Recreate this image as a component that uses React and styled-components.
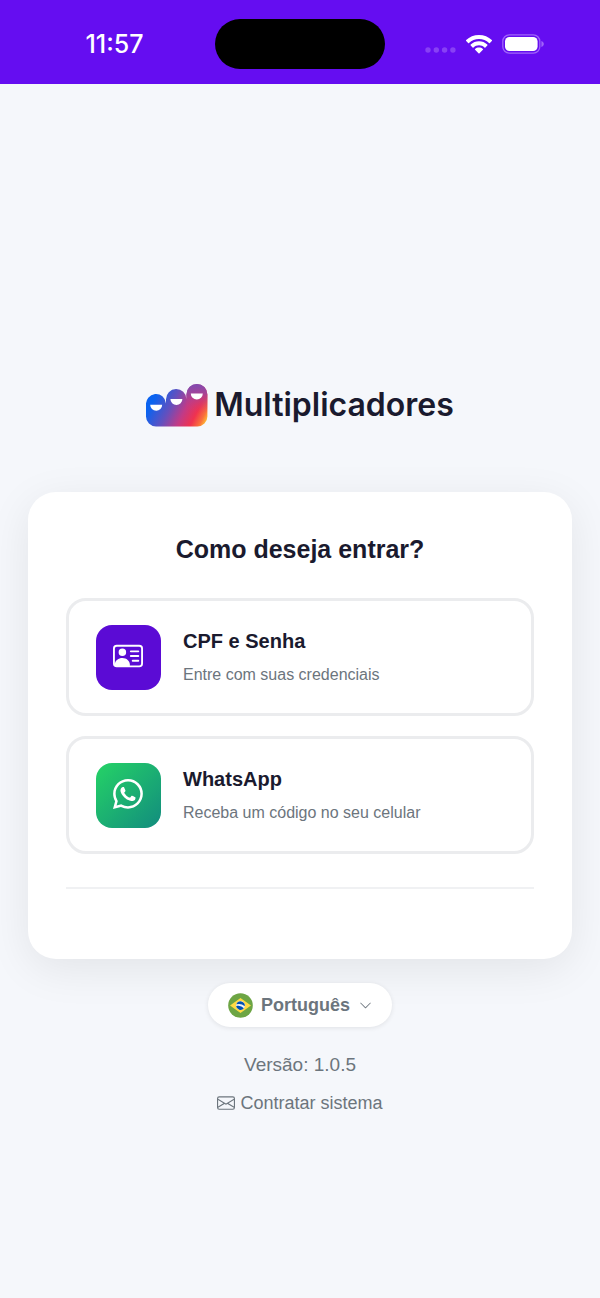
import styled, { createGlobalStyle } from 'styled-components';
import { BsPersonVcard, BsWhatsapp, BsChevronDown, BsEnvelope } from 'react-icons/bs';


export default function App(){
    return(
        <>
            <GlobalStyle />
            <Page>
                <StatusBar>
                    <Clock>11:57</Clock>
                    <Island />
                    <Signals>
                        <Dots />
                        <Wifi />
                        <Battery />
                    </Signals>
                </StatusBar>

                <Content>
                    <Logo>
                        <LogoMark />
                        <h1>Multiplicadores</h1>
                    </Logo>

                    <Card>
                        <h2>Como deseja entrar?</h2>

                        <Options>
                            <Option>
                                <OptionIcon $background='#5B0BD5'>
                                    <BsPersonVcard />
                                </OptionIcon>
                                <OptionText>
                                    <strong>CPF e Senha</strong>
                                    <span>Entre com suas credenciais</span>
                                </OptionText>
                            </Option>

                            <Option>
                                <OptionIcon $background='linear-gradient(135deg, #25D366 0%, #128C7E 100%)'>
                                    <BsWhatsapp />
                                </OptionIcon>
                                <OptionText>
                                    <strong>WhatsApp</strong>
                                    <span>Receba um código no seu celular</span>
                                </OptionText>
                            </Option>
                        </Options>

                        <Divider />
                    </Card>

                    <Language>
                        <BrazilFlag />
                        <select aria-label='Idioma' defaultValue='pt'>
                            <option value='pt'>Português</option>
                        </select>
                        <BsChevronDown />
                    </Language>

                    <Version>Versão: 1.0.5</Version>

                    <Contact href='#contratar'>
                        <BsEnvelope />
                        Contratar sistema
                    </Contact>
                </Content>
            </Page>
        </>
    );
}


function Dots(){
    return(
        <svg width='31' height='18' viewBox='0 0 31 18' fill='#8840F5' aria-hidden='true'>
            <circle cx='3' cy='15' r='2.7' />
            <circle cx='11.3' cy='15' r='2.7' />
            <circle cx='19.6' cy='15' r='2.7' />
            <circle cx='27.9' cy='15' r='2.7' />
        </svg>
    );
}

function Wifi(){
    return(
        <svg width='26' height='19' viewBox='0 0 26 19' fill='#FFFFFF' aria-hidden='true'>
            <path d='M13 0C8 0 3.5 1.9.2 5.1a.6.6 0 0 0 0 .9l1.9 1.9a.6.6 0 0 0 .9 0C5.6 5.4 9.1 3.9 13 3.9s7.4 1.5 10 4a.6.6 0 0 0 .9 0L25.8 6a.6.6 0 0 0 0-.9C22.5 1.9 18 0 13 0Z' />
            <path d='M13 6.3c-3.2 0-6.1 1.2-8.3 3.3a.6.6 0 0 0 0 .9l1.9 1.9a.6.6 0 0 0 .9 0c1.5-1.4 3.4-2.2 5.5-2.2s4 .8 5.5 2.2a.6.6 0 0 0 .9 0l1.9-1.9a.6.6 0 0 0 0-.9C19.1 7.5 16.2 6.3 13 6.3Z' />
            <path d='M13 12.5c-1.5 0-2.8.5-3.9 1.4a.6.6 0 0 0 0 .9l3.4 3.5a.7.7 0 0 0 1 0l3.4-3.5a.6.6 0 0 0 0-.9c-1.1-.9-2.4-1.4-3.9-1.4Z' />
        </svg>
    );
}

function Battery(){
    return(
        <svg width='42' height='20' viewBox='0 0 42 20' aria-hidden='true'>
            <rect x='.8' y='.8' width='37' height='18.4' rx='6.5' fill='none' stroke='#A064F9' strokeWidth='1.3' />
            <rect x='3' y='3' width='32.6' height='14' rx='4.5' fill='#FFFFFF' />
            <path d='M39.4 7v6c1.5-.5 2.4-1.7 2.4-3s-.9-2.5-2.4-3Z' fill='#A064F9' />
        </svg>
    );
}

function LogoMark(){
    return(
        <svg width='62' height='44' viewBox='0 0 62 44' aria-hidden='true'>
            <defs>
                <linearGradient id='markBase' x1='0' y1='14' x2='58' y2='44' gradientUnits='userSpaceOnUse'>
                    <stop offset='.12' stopColor='#0A63F0' />
                    <stop offset='.4' stopColor='#6350BE' />
                    <stop offset='.62' stopColor='#C23A86' />
                    <stop offset='.8' stopColor='#F0324F' />
                    <stop offset='.92' stopColor='#F9713A' />
                    <stop offset='1' stopColor='#FFC533' />
                </linearGradient>
                <linearGradient id='markTop' x1='0' y1='0' x2='0' y2='30' gradientUnits='userSpaceOnUse'>
                    <stop offset='0' stopColor='#7B4CB4' />
                    <stop offset='.35' stopColor='#9C469F' stopOpacity='.85' />
                    <stop offset='1' stopColor='#E0356A' stopOpacity='0' />
                </linearGradient>
            </defs>
            <path
                d='M0 22.5a10 10.5 0 0 1 20-2V16.5a10.2 10.2 0 0 1 20.4-.5V11.5A10.5 10.5 0 0 1 61.4 11.5V33.500a10 10 0 0 1-10 10H10A10 10 0 0 1 0 33.500Z'
                fill='url(#markBase)'
            />
            <path d='M40.400 11.500a10.500 10.500 0 0 1 21 0V30h-21Z' fill='url(#markTop)' />
            <g fill='#FFFFFF'>
                <path d='M4.200 21.800h12a6 6 0 0 1-12 0Z' />
                <path d='M24.400 16h12a6 6 0 0 1-12 0Z' />
                <path d='M44.800 10.400h12a6 6 0 0 1-12 0Z' />
            </g>
        </svg>
    );
}

function BrazilFlag(){
    return(
        <svg width='25' height='25' viewBox='0 0 25 25' aria-hidden='true'>
            <circle cx='12.5' cy='12.5' r='12.3' fill='#6DA544' />
            <path d='M12.5 5 23 12.5 12.5 20 2 12.5Z' fill='#FFDA44' />
            <circle cx='12.5' cy='12.5' r='4.4' fill='#F0F0F0' />
            <path d='M10.3 12.8c-.8 0-1.500.1-2.200.3a4.400 4.400 0 0 0 7.800 2.200 7.300 7.300 0 0 0-5.600-2.500Z' fill='#0052B4' />
            <path d='M16.800 13.300a4.400 4.400 0 0 0-8.500-2 8.900 8.900 0 0 1 8.500 2Z' fill='#0052B4' />
        </svg>
    );
}


const GlobalStyle = createGlobalStyle`
    * {
        box-sizing: border-box;
    }

    body {
        margin: 0;
        background-color: #F5F7FB;
        font-family: 'Liberation Sans', Arial, sans-serif;
    }

    h1, h2, p {
        margin: 0;
    }
`

const Page = styled.div`
    min-height: 100vh;
    display: flex;
    flex-direction: column;
`

const StatusBar = styled.header`
    height: 84px;
    padding: 4px 0 0;
    display: grid;
    grid-template-columns: 1fr 170px 1fr;
    align-items: center;
    background-color: #650DF1;
`

const Clock = styled.time`
    padding-left: 14px;
    text-align: center;
    font-family: Inter, sans-serif;
    font-weight: 500;
    font-size: 25px;
    color: #FFFFFF;
`

const Island = styled.div`
    height: 50px;
    border-radius: 25px;
    background-color: #000000;
`

const Signals = styled.div`
    padding-left: 40px;
    display: flex;
    align-items: center;
    gap: 10px;
`

const Content = styled.main`
    flex: 1;
    padding: 299px 28px 40px;
    display: flex;
    flex-direction: column;
    align-items: center;
`

const Logo = styled.div`
    height: 44px;
    margin-bottom: 65px;
    display: flex;
    align-items: center;
    gap: 6px;

    h1{
        font-family: Inter, sans-serif;
        font-weight: 600;
        font-size: 32px;
        line-height: 40px;
        color: #1A1A2E;
    }
`

const Card = styled.section`
    width: 100%;
    padding: 42px 38px 70px;
    border-radius: 28px;
    background-color: #FFFFFF;
    box-shadow: 0 10px 44px rgba(0, 0, 0, 0.08);

    h2{
        margin-bottom: 34px;
        text-align: center;
        font-weight: 700;
        font-size: 25px;
        line-height: 30px;
        color: #1A1A2E;
    }
`

const Options = styled.div`
    display: flex;
    flex-direction: column;
    gap: 20px;
`

const Option = styled.button`
    width: 100%;
    height: 118px;
    padding: 0 27px;
    display: flex;
    align-items: center;
    gap: 22px;
    border: 3px solid #EBECEE;
    border-radius: 20px;
    background-color: #FFFFFF;
    font-family: inherit;
    text-align: left;
    cursor: pointer;
`

const OptionIcon = styled.span`
    width: 65px;
    height: 65px;
    flex-shrink: 0;
    display: flex;
    align-items: center;
    justify-content: center;
    border-radius: 16px;
    background: ${props => props.$background};
    color: #FFFFFF;

    svg{
        width: 30px;
        height: 30px;
        margin: 0 1px 3px 0;
    }
`

const OptionText = styled.span`
    display: flex;
    flex-direction: column;
    gap: 8px;

    strong{
        font-weight: 700;
        font-size: 20px;
        line-height: 28px;
        color: #1A1A2E;
    }

    span{
        font-size: 16px;
        line-height: 24px;
        color: #6C757D;
    }
`

const Divider = styled.hr`
    height: 2px;
    margin: 33px 0 0;
    border: 0;
    background-color: #F0F1F3;
`

const Language = styled.label`
    height: 44px;
    margin-top: 24px;
    padding: 0 20px;
    display: flex;
    align-items: center;
    gap: 8px;
    border-radius: 22px;
    background-color: #FFFFFF;
    box-shadow: 0 1px 5px rgba(0, 0, 0, 0.09);
    color: #6C757D;

    select{
        appearance: none;
        padding: 0;
        border: 0;
        background: transparent;
        font-family: inherit;
        font-weight: 700;
        font-size: 18px;
        color: #6C757D;
    }

    svg:last-child{
        width: 13px;
        height: 13px;
    }
`

const Version = styled.p`
    margin-top: 26px;
    font-size: 19px;
    line-height: 24px;
    color: #6C757D;
`

const Contact = styled.a`
    margin-top: 14px;
    display: flex;
    align-items: center;
    gap: 5px;
    font-size: 18px;
    line-height: 24px;
    color: #6C757D;
    text-decoration: none;
`
